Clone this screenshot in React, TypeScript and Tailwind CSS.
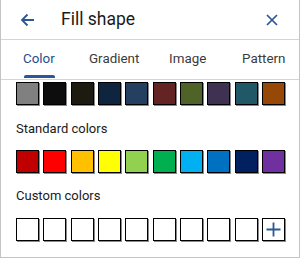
import React from "react";

const darker = ["#808080", "#0d0d0d", "#1d1b10", "#0f243e", "#243f60", "#632423", "#4f6228", "#3f3151", "#205867", "#974806"];
const standard = ["#c00000", "#ff0000", "#ffc000", "#ffff00", "#92d050", "#00b050", "#00b0f0", "#0070c0", "#002060", "#7030a0"];

const Swatch: React.FC<{ color?: string; children?: React.ReactNode }> = ({ color, children }) => (
  <div
    className="w-[23px] h-[23px] border border-black shadow-[1px_1px_0_#8a8a8a] flex items-center justify-center"
    style={{ backgroundColor: color ?? "#ffffff" }}
  >
    {children}
  </div>
);

const App: React.FC = () => {
  return (
    <div className="w-[300px] h-[258px] bg-white border-x border-b border-[#c4c4c4] overflow-hidden font-['Roboto',sans-serif]">
      <div className="h-10 flex items-center border-b border-[#d4d4d4]">
        <svg className="ml-[19px]" width="15" height="14" viewBox="0 0 15 14" fill="none" stroke="#2b5797" strokeWidth="1.8">
          <path d="M14 7H2M7.5 1.5L2 7l5.5 5.5" />
        </svg>
        <span className="ml-[26px] text-[17.5px] text-[#1a1a1a]">Fill shape</span>
        <svg className="ml-auto mr-[21px]" width="12" height="12" viewBox="0 0 12 12" stroke="#2b5797" strokeWidth="1.7">
          <path d="M1 1l10 10M11 1L1 11" />
        </svg>
      </div>
      <div className="h-10 flex border-b border-[#d4d4d4] text-[13.4px] pl-[22px] text-[#3a3a3a]">
        <div className="w-[66px] flex items-center">
          <span className="relative h-full flex items-center text-[#1f4e8c]">
            Color
            <span className="absolute left-[1px] right-0 bottom-[1px] h-[3px] bg-[#2b5797] rounded-t-[2px]" />
          </span>
        </div>
        <div className="w-[80px] flex items-center">Gradient</div>
        <div className="w-[73px] flex items-center">Image</div>
        <div className="flex items-center">Pattern</div>
      </div>
      <div className="pl-[15px] pr-[14px] pt-[2px]">
        <div className="flex justify-between">
          {darker.map((c) => (
            <Swatch key={c} color={c} />
          ))}
        </div>
        <div className="mt-[16px] text-[13px] text-[#1a1a1a] leading-[16px]">Standard colors</div>
        <div className="mt-[13px] flex justify-between">
          {standard.map((c) => (
            <Swatch key={c} color={c} />
          ))}
        </div>
        <div className="mt-[15px] text-[13px] text-[#1a1a1a] leading-[16px]">Custom colors</div>
        <div className="mt-[14px] flex justify-between">
          {Array.from({ length: 9 }).map((_, i) => (
            <Swatch key={i} />
          ))}
          <Swatch>
            <svg width="15" height="15" viewBox="0 0 15 15" stroke="#2b5797" strokeWidth="1.8">
              <path d="M7.5 0.5v14M0.5 7.5h14" />
            </svg>
          </Swatch>
        </div>
      </div>
    </div>
  );
};

export default App;
